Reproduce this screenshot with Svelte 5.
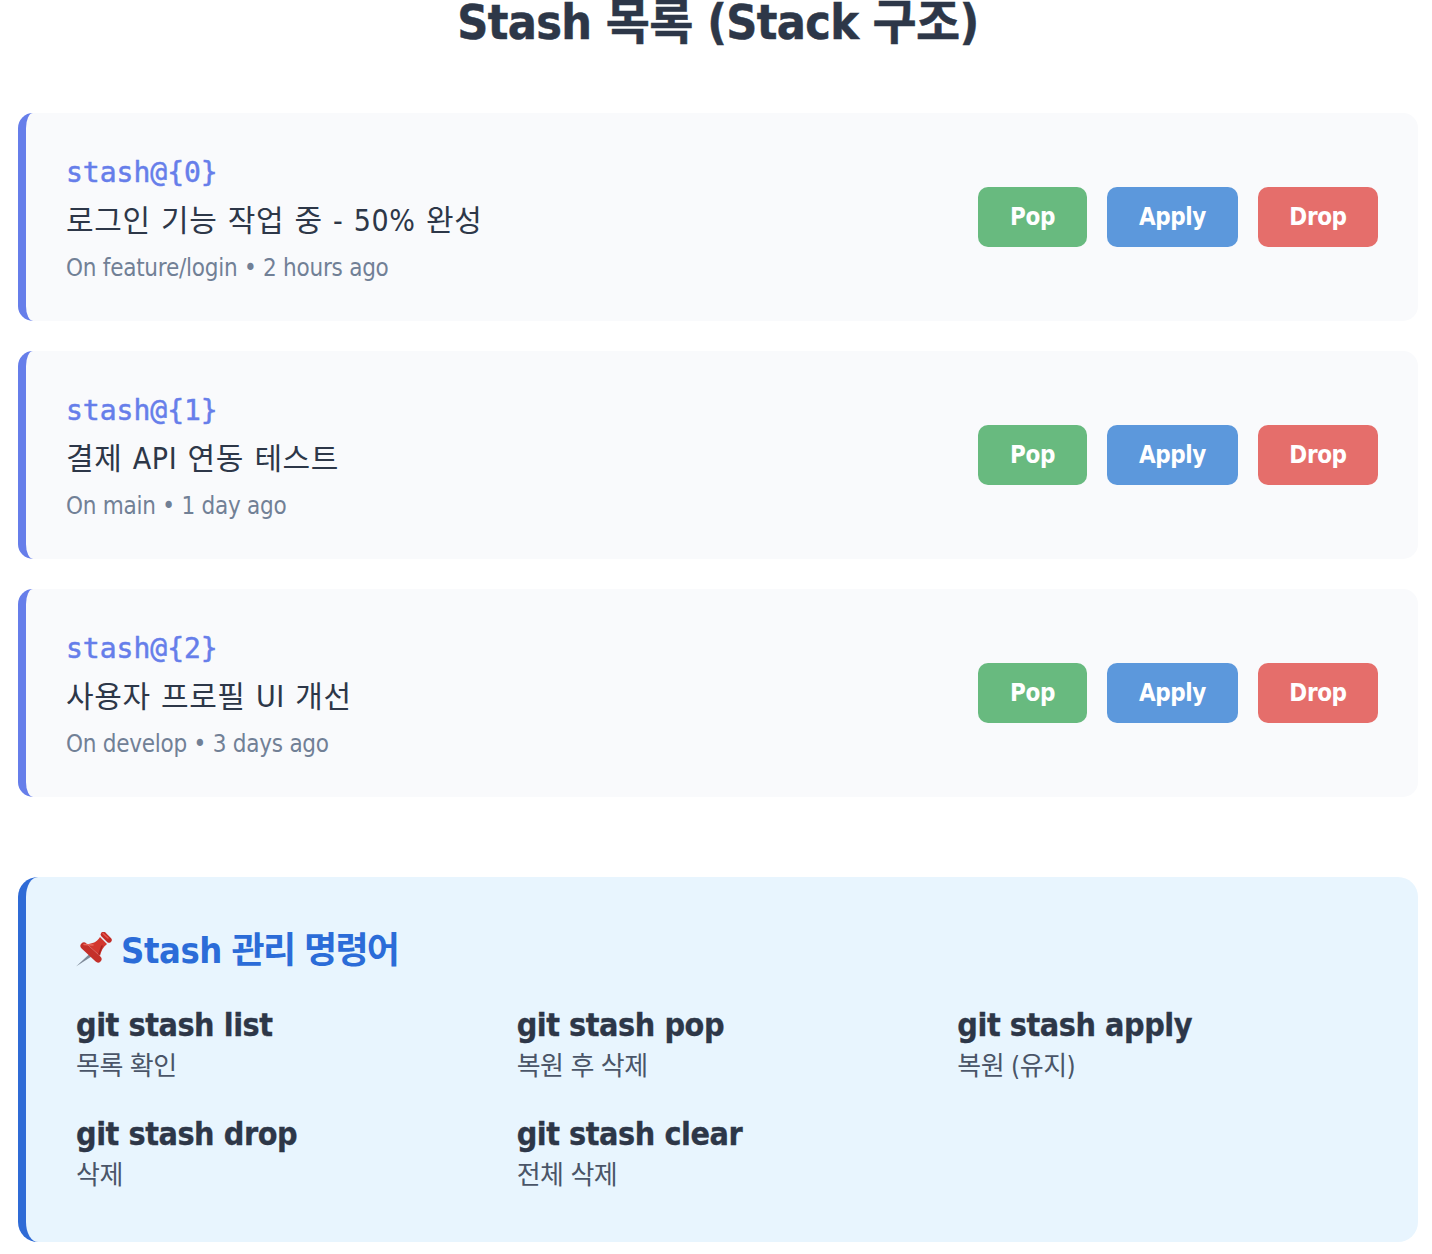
<script>
  const stashes = [
    { id: 0, title: '로그인 기능 작업 중 - 50% 완성', meta: 'On feature/login • 2 hours ago' },
    { id: 1, title: '결제 API 연동 테스트', meta: 'On main • 1 day ago' },
    { id: 2, title: '사용자 프로필 UI 개선', meta: 'On develop • 3 days ago' }
  ];
  const commands = [
    { cmd: 'git stash list', desc: '목록 확인' },
    { cmd: 'git stash pop', desc: '복원 후 삭제' },
    { cmd: 'git stash apply', desc: '복원 (유지)' },
    { cmd: 'git stash drop', desc: '삭제' },
    { cmd: 'git stash clear', desc: '전체 삭제' }
  ];
</script>

<main class="page">
  <h1>Stash 목록 (Stack 구조)</h1>
  <section class="list">
    {#each stashes as s}
      <article class="card">
        <div class="info">
          <div class="ref">stash@{'{'}{s.id}{'}'}</div>
          <div class="title">{s.title}</div>
          <div class="meta">{s.meta}</div>
        </div>
        <div class="actions">
          <button class="pop">Pop</button>
          <button class="apply">Apply</button>
          <button class="drop">Drop</button>
        </div>
      </article>
    {/each}
  </section>
  <section class="box">
    <h2>
      <svg class="pin" viewBox="0 0 36 36" aria-hidden="true">
        <path d="M0 34.5 L14.5 21 L17 23.5 Z" fill="#7f8b99"/>
        <path d="M8 14 L22 27" stroke="#c4302a" stroke-width="7" stroke-linecap="round" fill="none"/>
        <path d="M24 5 L31 12 C27 15 25 19 24 24 L11 12 C16 12 21 10 24 5 Z" fill="#d2372f"/>
        <path d="M27.5 2.5 L33 8" stroke="#c22c28" stroke-width="5.4" stroke-linecap="round" fill="none"/>
        <path d="M27 1.5 L32 6" stroke="#e8574d" stroke-width="1.5" stroke-linecap="round" fill="none"/>
        <path d="M8 12.5 L17 13" stroke="#e8655a" stroke-width="1.5" stroke-linecap="round" fill="none"/>
        <path d="M23 22 L26 14" stroke="#a82522" stroke-width="1.6" stroke-linecap="round" fill="none"/>
      </svg>
      <span class="label"><span class="en">Stash</span> 관리 명령어</span>
    </h2>
    <div class="grid">
      {#each commands as c}
        <div class="item">
          <div class="cmd">{c.cmd}</div>
          <div class="desc">{c.desc}</div>
        </div>
      {/each}
    </div>
  </section>
</main>

<style>
  :global(body) {
    margin: 0;
    background: #fff;
  }
  .page {
    box-sizing: border-box;
    width: 1432px;
    height: 1254px;
    padding: 0 14px 0 18px;
    overflow: hidden;
    font-family: "DejaVu Sans", "Noto Sans CJK KR", sans-serif;
    font-stretch: condensed;
    color: #2d3748;
  }
  h1 {
    margin: 0 0 69px;
    height: 44px;
    line-height: 44px;
    font-size: 48px;
    font-weight: 700;
    text-align: center;
    letter-spacing: -0.65px;
    -webkit-text-stroke: 0.5px #2d3748;
    color: #2d3748;
  }
  .list {
    display: flex;
    flex-direction: column;
    gap: 30px;
  }
  .card {
    box-sizing: border-box;
    height: 208px;
    display: flex;
    align-items: center;
    justify-content: space-between;
    padding: 0 40px;
    background: #f9fafc;
    border-left: 8px solid #667eea;
    border-radius: 15px;
  }
  .info {
    padding-top: 7px;
  }
  .ref {
    font-family: "DejaVu Sans Mono", monospace;
    font-size: 28px;
    line-height: 48px;
    -webkit-text-stroke: 0.5px #667eea;
    color: #667eea;
  }
  .title {
    font-size: 30px;
    line-height: 48px;
    letter-spacing: 0.6px;
    word-spacing: 1.2px;
    color: #2d3748;
  }
  .meta {
    margin-top: -1px;
    font-size: 24px;
    line-height: 48px;
    letter-spacing: -0.25px;
    color: #718096;
  }
  .actions {
    display: flex;
    gap: 20px;
  }
  button {
    height: 60px;
    padding: 0 20px;
    border: 0;
    border-radius: 10px;
    font-family: inherit;
    font-stretch: inherit;
    font-size: 24px;
    font-weight: 700;
    letter-spacing: -0.4px;
    color: #fff;
  }
  .pop { background: #68ba7f; width: 109px; }
  .apply { background: #5c98dc; width: 131px; }
  .drop { background: #e56e6b; width: 120px; }
  .box {
    box-sizing: border-box;
    height: 365px;
    margin-top: 80px;
    padding: 50px;
    background: #e8f5fe;
    border-left: 8px solid #2f6bd6;
    border-radius: 20px;
  }
  h2 {
    display: flex;
    align-items: center;
    gap: 9px;
    margin: 0 0 32px;
    height: 46px;
    font-size: 36px;
    line-height: 38px;
    font-weight: 700;
    letter-spacing: -1.7px;
    color: #2b6cd8;
  }
  .label {
    margin-top: 2px;
  }
  .en {
    letter-spacing: -0.4px;
  }
  .pin {
    width: 36px;
    height: 36px;
    flex: none;
  }
  .grid {
    display: grid;
    grid-template-columns: repeat(3, 1fr);
    gap: 30px;
  }
  .item {
    height: 79px;
  }
  .cmd {
    font-size: 32px;
    line-height: 40px;
    font-weight: 700;
    letter-spacing: -0.45px;
    -webkit-text-stroke: 0.3px #2d3748;
    color: #2d3748;
  }
  .desc {
    font-size: 26px;
    line-height: 43px;
    letter-spacing: -0.5px;
    color: #4a5568;
  }
</style>
